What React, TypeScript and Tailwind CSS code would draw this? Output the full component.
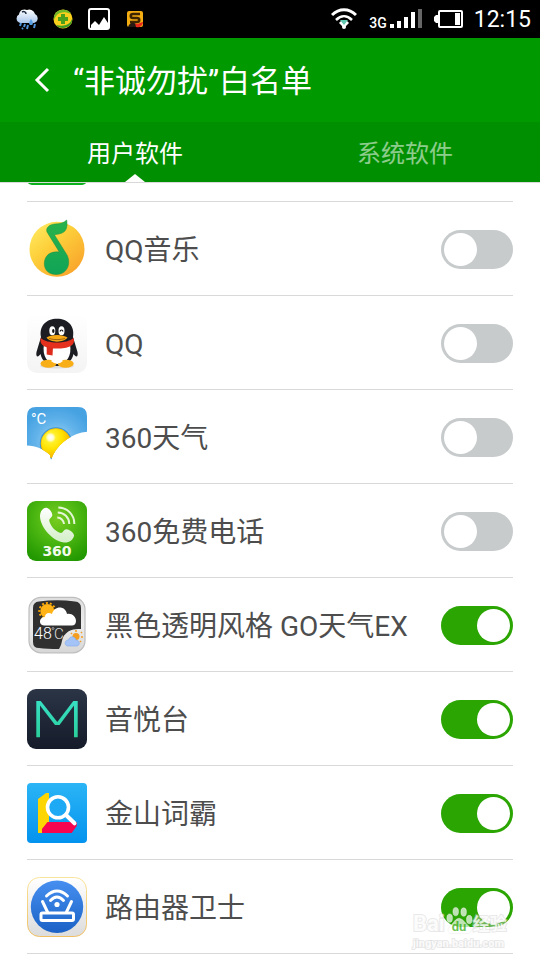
import { useState, type ReactNode } from "react";

function CloudRainIcon() {
  return (
    <svg width="24" height="24" viewBox="0 0 24 24" aria-hidden="true">
      <defs>
        <linearGradient id="rainCloud" x1="0" y1="0" x2="0" y2="1">
          <stop offset="0" stopColor="#ffffff" />
          <stop offset="1" stopColor="#a9c6ec" />
        </linearGradient>
      </defs>
      <path d="M5 16a4.600 4.600 0 0 1-1-8.500A5.500 5.500 0 0 1 12 3a6 6 0 0 1 8 4 4.800 4.800 0 0 1-1 9z" fill="url(#rainCloud)" />
      <path d="M7 5c2-1 4 0 4 2" stroke="#1c2b44" strokeWidth="1.500" fill="none" />
      <path d="M6 16l-1 3M10 17l-1 3M13 18l-1 4M20 17l-1 4M8 21l-1 1" stroke="#4f93dc" strokeWidth="2" />
      <path d="M16 12c-3 4-2 6 0 6s3-2 0-6z" fill="#5ba1e6" />
    </svg>
  );
}

function GuardIcon() {
  return (
    <svg width="20" height="20" viewBox="0 0 20 20" aria-hidden="true">
      <circle cx="10" cy="10" r="9.500" fill="#fbd01c" />
      <path d="M1 11C0 4 6 0 12 1c3 0 5 2 6 4-4-2-8-2-11-1-3 1-5 4-6 7z" fill="#6fb92b" />
      <path d="M19 10c1 5-4 9-9 9-3 0-6-1-7-3 4 1 7 1 10 0 3-1 5-3 6-6z" fill="#3f9a25" />
      <path d="M8 5h4v3h3v4h-3v3H8v-3H5V8h3z" fill="#4ba01c" />
    </svg>
  );
}

function PictureIcon() {
  return (
    <svg width="22" height="22" viewBox="0 0 22 22" aria-hidden="true">
      <rect x="1" y="1" width="20" height="20" rx="2" fill="#000" stroke="#fff" strokeWidth="2" />
      <path d="M3 20v-3l4-4 4 4 5-8 4 6v5z" fill="#fff" />
    </svg>
  );
}

function SpeedIcon() {
  return (
    <svg width="17" height="17" viewBox="0 0 17 17" aria-hidden="true">
      <rect width="16" height="16" rx="2" fill="#f3ac12" />
      <path d="M13 3H6C3 3 3 7 6 7h4c3 0 3 4 0 4H3" stroke="#3d2500" strokeWidth="2.500" fill="none" />
      <path d="M1 16c2-5 5-5 8-3v3z" fill="#271a12" />
      <path d="M8 12c2 2 4 0 8-1 0 4-4 6-7 5z" fill="#e8291c" />
    </svg>
  );
}

function WifiIcon() {
  return (
    <svg width="26" height="22" viewBox="0 0 26 22" aria-hidden="true">
      <path d="M1 7c7-7 17-7 24 0" stroke="#fff" strokeWidth="3" fill="none" />
      <path d="M5 12c5-5 11-5 16 0" stroke="#fff" strokeWidth="2.500" fill="none" />
      <path d="M8 15c3-4 7-4 10 0l-5 5z" fill="#fff" />
      <path d="M9 12h8l-4 5z" fill="#62c9b0" />
      <circle cx="13" cy="19" r="2" fill="#fff" />
    </svg>
  );
}

function SignalIcon() {
  return (
    <svg width="32" height="20" viewBox="0 0 32 20" aria-hidden="true">
      <path d="M0 15h4v4H0zM7 12h4v7H7zM14 8h4v11h-4zM21 3h4v16h-4z" fill="#fff" />
      <path d="M28 0h4v19h-4z" fill="#666" />
    </svg>
  );
}

function BatteryIcon() {
  return (
    <svg width="30" height="18" viewBox="0 0 30 18" aria-hidden="true">
      <rect x="5" y="1" width="23" height="16" rx="1" fill="none" stroke="#fff" strokeWidth="2" />
      <path d="M4 5H2L0 7v4l2 2h2zM21 3h5v12h-5z" fill="#fff" />
    </svg>
  );
}

function AppIcon({ children }: { children?: ReactNode }) {
  return (
    <svg className="size-[60px] shrink-0" viewBox="0 0 60 60" aria-hidden="true">
      {children}
    </svg>
  );
}

function MusicIcon() {
  return (
    <AppIcon>
      <defs>
        <linearGradient id="musicDisc" x1="0.1" y1="0.1" x2="0.8" y2="0.9">
          <stop offset="0" stopColor="#ffe75c" />
          <stop offset="0.4" stopColor="#fdd03b" />
          <stop offset="1" stopColor="#f9a72c" />
        </linearGradient>
        <linearGradient id="musicNote" x1="0" y1="0" x2="0" y2="1">
          <stop offset="0" stopColor="#2ab34b" />
          <stop offset="1" stopColor="#10a457" />
        </linearGradient>
      </defs>
      <circle cx="30" cy="30.300" r="27.500" fill="url(#musicDisc)" />
      <path
        d="M39.700 1C40.500 7 40 12 35 14C32 15.500 29 15 27.500 16L40 36C44.500 45 40 55.500 29 55.500C22 55.500 17 51 17.300 44C17.600 36 24 32 32.300 33L20 13C18.500 9 22 5.500 28 5C33 4.700 37 4 39.700 1Z"
        fill="url(#musicNote)"
        stroke="#1c913f"
        strokeWidth="0.500"
      />
    </AppIcon>
  );
}

function PenguinIcon() {
  return (
    <AppIcon>
      <defs>
        <linearGradient id="penguinTile" x1="0" y1="0" x2="0" y2="1">
          <stop offset="0" stopColor="#ffffff" />
          <stop offset="1" stopColor="#f4f4f4" />
        </linearGradient>
      </defs>
      <rect width="60" height="60" rx="10" fill="url(#penguinTile)" />
      <ellipse cx="30" cy="53" rx="17" ry="2.500" fill="#dedede" />
      <path d="M14 24C12 13 19 5.700 30 5.700S48 13 46 24L50.500 39C51.500 44 49 45 46.500 41C45 49 38 53 30 53S15 49 13.500 41C11 45 8.500 44 9.500 39Z" fill="#1b1d22" />
      <path d="M17 31C15 43 20 51 30 51S45 43 43 31C36 36 24 36 17 31Z" fill="#fff" />
      <ellipse cx="25.300" cy="17.700" rx="3" ry="4.500" fill="#fff" />
      <ellipse cx="34.500" cy="17.700" rx="3" ry="4.500" fill="#fff" />
      <ellipse cx="26.300" cy="18" rx="1.200" ry="2" fill="#111" />
      <path d="M33 18.500c.5-2 2.500-2 3 0" stroke="#111" strokeWidth="1.200" fill="none" />
      <path d="M13.700 25C20 31 40 31 46.500 25C49 33 41 35.500 30 35.500C19 35.500 12 33 13.700 25Z" fill="#e5301d" />
      <path d="M19.700 33C22 34 24 34.500 26 34.500L25.500 42.500L19.700 41.500Z" fill="#dd2b1c" />
      <path d="M19.500 24.500C24 21 36 21 40.500 24.500C37 30 23 30 19.500 24.500Z" fill="#f7a916" />
      <path d="M22 25.500C27 27 33 27 38 25.500" stroke="#8a5410" strokeWidth="0.800" fill="none" />
      <ellipse cx="21.500" cy="50.700" rx="8" ry="4" fill="#f8ae17" />
      <ellipse cx="38.700" cy="50.700" rx="8" ry="4" fill="#f8ae17" />
      <path d="M24 48Q30 53 36 48L34 46H26Z" fill="#fff" />
    </AppIcon>
  );
}

function WeatherIcon() {
  return (
    <AppIcon>
      <defs>
        <radialGradient id="skyGlow" cx="0.5" cy="0.6" r="0.6">
          <stop offset="0" stopColor="#a9d8f7" />
          <stop offset="0.6" stopColor="#62b3ea" />
          <stop offset="1" stopColor="#47a2e2" />
        </radialGradient>
        <radialGradient id="weatherSun" cx="0.32" cy="0.3" r="0.8">
          <stop offset="0" stopColor="#fff" />
          <stop offset="0.12" stopColor="#fffbd0" />
          <stop offset="0.22" stopColor="#fff02a" />
          <stop offset="0.5" stopColor="#ffe100" />
          <stop offset="1" stopColor="#f59d00" />
        </radialGradient>
        <clipPath id="skyShape">
          <path d="M0 9Q0 0 9 0H51Q60 0 60 9V24.700C46 26 33 35 26 48L24 53L23 48C16 42 9 38.500 0 38.500Z" />
        </clipPath>
      </defs>
      <g clipPath="url(#skyShape)">
        <rect width="60" height="60" fill="url(#skyGlow)" />
        <circle cx="29" cy="36.500" r="15.500" fill="#ffd000" stroke="#3c96d5" strokeWidth="1.500" />
        <circle cx="29" cy="36.500" r="15" fill="url(#weatherSun)" stroke="#f3b000" strokeWidth="0.600" />
      </g>
      <text x="4" y="17" fontSize="15" fill="#fff" fontFamily="Roboto, sans-serif">°C</text>
    </AppIcon>
  );
}

function PhoneIcon() {
  return (
    <AppIcon>
      <defs>
        <radialGradient id="phoneTile" cx="0.5" cy="0.3" r="0.75">
          <stop offset="0" stopColor="#78cc20" />
          <stop offset="0.5" stopColor="#4bb611" />
          <stop offset="1" stopColor="#229801" />
        </radialGradient>
        <linearGradient id="handset" x1="0" y1="0" x2="0" y2="1">
          <stop offset="0" stopColor="#ffffff" />
          <stop offset="1" stopColor="#d3efc8" />
        </linearGradient>
      </defs>
      <rect width="60" height="60" rx="9" fill="url(#phoneTile)" />
      <path
        d="M19 6.700C21 6 25.500 11 25.300 14C25 17 22 17 22.300 20C24 26 29 31 34 32C36 32 37 28 39.500 28.300C43 29 47.500 32 47 35C46 39 42 42 37 41.500C24 39.500 13 25 13 15C13 11 15 7.500 19 6.700Z"
        fill="url(#handset)"
      />
      <path d="M30.300 16.500A7 7 0 0 1 37 23M30.700 11.500A11.500 11.500 0 0 1 42.300 23M31.300 6.500A16 16 0 0 1 47.300 23" fill="none" stroke="#e3f7d7" strokeWidth="2" />
      <text x="30" y="55" fontSize="14" fontWeight="700" textAnchor="middle" fill="#f2fbeb" fontFamily="DejaVu Sans, sans-serif">360</text>
    </AppIcon>
  );
}

function GoWeatherIcon() {
  return (
    <AppIcon>
      <defs>
        <linearGradient id="goFrame" x1="0" y1="0" x2="0" y2="1">
          <stop offset="0" stopColor="#dedede" />
          <stop offset="0.5" stopColor="#ededed" />
          <stop offset="1" stopColor="#d6d6d6" />
        </linearGradient>
      </defs>
      <rect x="2" y="2.300" width="56" height="55.500" rx="12" fill="url(#goFrame)" stroke="#bdbdbd" strokeWidth="1.200" />
      <path d="M12 6.500Q30 4 48 6.500Q54 7 54 13V34C46 34 42 35 38.500 39C34 43 36 48 32 54Q20 54 12 53Q6 53 6 47V13Q6 7 12 6.500Z" fill="#303030" />
      <circle cx="20.300" cy="16" r="7" fill="#ffb316" />
      <circle cx="20.300" cy="16" r="8" fill="none" stroke="#ffa800" strokeWidth="2" strokeDasharray="2 2" />
      <path d="M17 30.500C11 30 12 22 18 22C18 18 22 17 25 19C27 11 38 10 40 19C45 18 49 22 49 26C49 29 47 30.500 45 30.500Z" fill="#fff" />
      <text x="7" y="44" fontSize="16" fontWeight="300" fill="#fff" fontFamily="Roboto, sans-serif">48</text>
      <text x="27" y="44" fontSize="15" fontWeight="300" fill="#ddd" fontFamily="Roboto, sans-serif">C</text>
      <circle cx="26" cy="33.500" r="1" fill="none" stroke="#ddd" strokeWidth="0.600" />
      <circle cx="49" cy="41.500" r="3.500" fill="#f59d1e" />
      <path d="M49 35v2M44 38l1 1M54 38l1-1M54 42h2M53 46l1 1" stroke="#f59d1e" strokeWidth="1.600" />
      <path d="M40.500 51C36.500 50 38 44.500 41.500 45C43 40.500 48 41 49 45C53 45 53.500 50.500 50 51Z" fill="#a4c3f6" stroke="#7fa7ea" strokeWidth="0.600" />
    </AppIcon>
  );
}

function YinyuetaiIcon() {
  return (
    <AppIcon>
      <defs>
        <linearGradient id="nightTile" x1="0" y1="0" x2="0" y2="1">
          <stop offset="0" stopColor="#2b3546" />
          <stop offset="1" stopColor="#151b29" />
        </linearGradient>
        <linearGradient id="mintLine" x1="0" y1="0" x2="0" y2="1">
          <stop offset="0" stopColor="#38e0c4" />
          <stop offset="1" stopColor="#2bcf9c" />
        </linearGradient>
      </defs>
      <rect width="60" height="60" rx="9" fill="url(#nightTile)" />
      <path d="M9.300 12H13.700L30.300 33L46.300 12H50.700V48.300H47V16.500L32.500 36H28L13 16.500V48.300H9.300Z" fill="url(#mintLine)" />
    </AppIcon>
  );
}

function DictionaryIcon() {
  return (
    <AppIcon>
      <defs>
        <linearGradient id="dictTile" x1="0" y1="0" x2="0" y2="1">
          <stop offset="0" stopColor="#2bb5f6" />
          <stop offset="1" stopColor="#0392ee" />
        </linearGradient>
      </defs>
      <rect width="60" height="60" rx="4" fill="url(#dictTile)" />
      <path d="M11 16L19 10H22V40L15 46V50H11Z" fill="#fdd500" />
      <path d="M15 46L20.500 39H49.700V43L44.700 50H15Z" fill="#f7054f" />
      <circle cx="31" cy="24.300" r="10.500" fill="#1ea9f4" stroke="#fff" strokeWidth="3.600" />
      <path d="M39 32L47.500 40.300" stroke="#fff" strokeWidth="4" strokeLinecap="round" />
    </AppIcon>
  );
}

function RouterIcon() {
  return (
    <AppIcon>
      <defs>
        <linearGradient id="routerTile" x1="0" y1="0" x2="0" y2="1">
          <stop offset="0" stopColor="#ffffff" />
          <stop offset="1" stopColor="#dcdcdc" />
        </linearGradient>
        <linearGradient id="routerEdge" x1="0" y1="0" x2="0" y2="1">
          <stop offset="0" stopColor="#f9e49b" />
          <stop offset="1" stopColor="#f0bf62" />
        </linearGradient>
        <linearGradient id="routerDisc" x1="0" y1="0" x2="0" y2="1">
          <stop offset="0" stopColor="#468ff0" />
          <stop offset="1" stopColor="#1c62c6" />
        </linearGradient>
      </defs>
      <rect x="0.500" y="0.500" width="59" height="59" rx="12" fill="url(#routerTile)" stroke="url(#routerEdge)" />
      <circle cx="30" cy="29.700" r="26.200" fill="url(#routerDisc)" />
      <circle cx="30" cy="27.500" r="2.600" fill="#fff" />
      <path d="M23.500 23.500Q30 16.500 36.500 23.500M19.500 19Q30 9 40.500 19M15.500 24.500L20.500 35M44.500 24.500L39.500 35" fill="none" stroke="#fff" strokeWidth="3" strokeLinecap="round" />
      <rect x="14" y="36" width="32.500" height="7.600" rx="1.500" fill="none" stroke="#fff" strokeWidth="3" />
    </AppIcon>
  );
}

type AppEntry = { name: string; icon: ReactNode; allowed: boolean };

const userApps: AppEntry[] = [
  { name: "QQ音乐", icon: <MusicIcon />, allowed: false },
  { name: "QQ", icon: <PenguinIcon />, allowed: false },
  { name: "360天气", icon: <WeatherIcon />, allowed: false },
  { name: "360免费电话", icon: <PhoneIcon />, allowed: false },
  { name: "黑色透明风格 GO天气EX", icon: <GoWeatherIcon />, allowed: true },
  { name: "音悦台", icon: <YinyuetaiIcon />, allowed: true },
  { name: "金山词霸", icon: <DictionaryIcon />, allowed: true },
  { name: "路由器卫士", icon: <RouterIcon />, allowed: true },
];

function AppRow({ app }: { app: AppEntry }) {
  const [allowed, setAllowed] = useState(app.allowed);
  return (
    <li className="border-b border-[#d9d9d9]">
      <label className="flex items-center pt-[17px] pb-4">
        {app.icon}
        <span className="ml-[18px] flex-1 pt-1 text-[28px] leading-9 whitespace-nowrap text-[#4d4d4d]">{app.name}</span>
        <input
          type="checkbox"
          role="switch"
          checked={allowed}
          onChange={(event) => setAllowed(event.target.checked)}
          className="h-[39px] w-[72px] shrink-0 appearance-none rounded-full bg-[#c7cbcc] p-[3px] before:block before:size-[33px] before:rounded-full before:bg-white checked:bg-[#2aa502] checked:before:translate-x-[33px]"
        />
      </label>
    </li>
  );
}

function StatusBar() {
  return (
    <div className="flex h-[38px] items-center bg-black pr-[9px] pl-[15px] text-white">
      <div className="flex items-center">
        <CloudRainIcon />
        <span className="ml-[14px]"><GuardIcon /></span>
        <span className="ml-[15px]"><PictureIcon /></span>
        <span className="ml-[17px]"><SpeedIcon /></span>
      </div>
      <div className="ml-auto flex items-center">
        <WifiIcon />
        <span className="ml-3 pt-2 text-sm leading-4 font-medium">3G</span>
        <span className="ml-[3px]"><SignalIcon /></span>
        <span className="ml-3"><BatteryIcon /></span>
        <time className="ml-[10px] pt-px text-[23px] leading-8">12:15</time>
      </div>
    </div>
  );
}

function Watermark() {
  return (
    <div className="pointer-events-none absolute right-[27px] bottom-2 flex w-[100px] flex-col font-bold text-white/80 [paint-order:stroke_fill] [-webkit-text-stroke:2px_rgba(205,205,205,0.45)]">
      <div className="flex items-end text-[22px] leading-6">
        <span>Bai</span>
        <svg width="28" height="32" viewBox="0 0 30 32" className="shrink-0" aria-hidden="true">
          <g fill="#fff" fillOpacity="0.7" stroke="#ddd" strokeOpacity="0.5">
            <ellipse cx="5" cy="14" rx="3" ry="4.500" />
            <ellipse cx="11.500" cy="7" rx="3" ry="4.500" />
            <ellipse cx="20" cy="7.500" rx="3" ry="4.500" />
            <ellipse cx="26" cy="15.500" rx="3" ry="4.500" />
            <path d="M15 14C10 15 9 20 5 23C1 28 5 32 10 30H21C27 32 30 27 26 23C22 20 20 15 15 14Z" />
          </g>
          <text x="15" y="28" textAnchor="middle" fontSize="14" fill="#2aa502" fillOpacity="0.7" className="[-webkit-text-stroke:0px]" fontFamily="Roboto, sans-serif">du</text>
        </svg>
        <span className="text-[17px] whitespace-nowrap">经验</span>
      </div>
      <span className="text-[11px] leading-4">jingyan.baidu.com</span>
    </div>
  );
}

export default function App() {
  const [tab, setTab] = useState("user");
  const tabs = [
    { id: "user", label: "用户软件" },
    { id: "system", label: "系统软件" },
  ];
  return (
    <div className="relative min-h-screen bg-white font-['Roboto','Noto_Sans_CJK_SC',sans-serif]">
      <StatusBar />
      <header className="bg-[#009900] text-white">
        <div className="flex h-[84px] items-center pl-[33px]">
          <button type="button" aria-label="返回" className="mr-[22px]">
            <svg width="18" height="28" viewBox="0 0 18 28" fill="none" stroke="currentColor" strokeWidth="3" aria-hidden="true">
              <path d="M15 3L4 14L15 25" />
            </svg>
          </button>
          <h1 className="pt-1 text-[31px] leading-10">“非诚勿扰”白名单</h1>
        </div>
        <div role="tablist" className="grid h-[60px] grid-cols-2 bg-[#008f00]">
          {tabs.map((item) => (
            <button
              key={item.id}
              type="button"
              role="tab"
              aria-selected={tab === item.id}
              onClick={() => setTab(item.id)}
              className={
                tab === item.id
                  ? "relative pt-1 text-2xl leading-8 text-white"
                  : "relative pt-1 text-2xl leading-8 text-white/55"
              }
            >
              {item.label}
              {tab === item.id && (
                <svg width="20" height="8" viewBox="0 0 20 8" className="absolute bottom-0 left-1/2 -translate-x-1/2" aria-hidden="true">
                  <path d="M0 8L10 0L20 8Z" fill="#fff" />
                </svg>
              )}
            </button>
          ))}
        </div>
      </header>
      <main className="border-t border-[#d9d9d9] px-[27px]">
        <div className="flex h-[19px] items-end overflow-hidden border-b border-[#d9d9d9] pb-4">
          <AppIcon>
            <rect width="60" height="60" rx="5" fill="#0bb01c" />
          </AppIcon>
        </div>
        <ul>
          {userApps.map((app) => (
            <AppRow key={app.name} app={app} />
          ))}
        </ul>
      </main>
      <Watermark />
    </div>
  );
}
